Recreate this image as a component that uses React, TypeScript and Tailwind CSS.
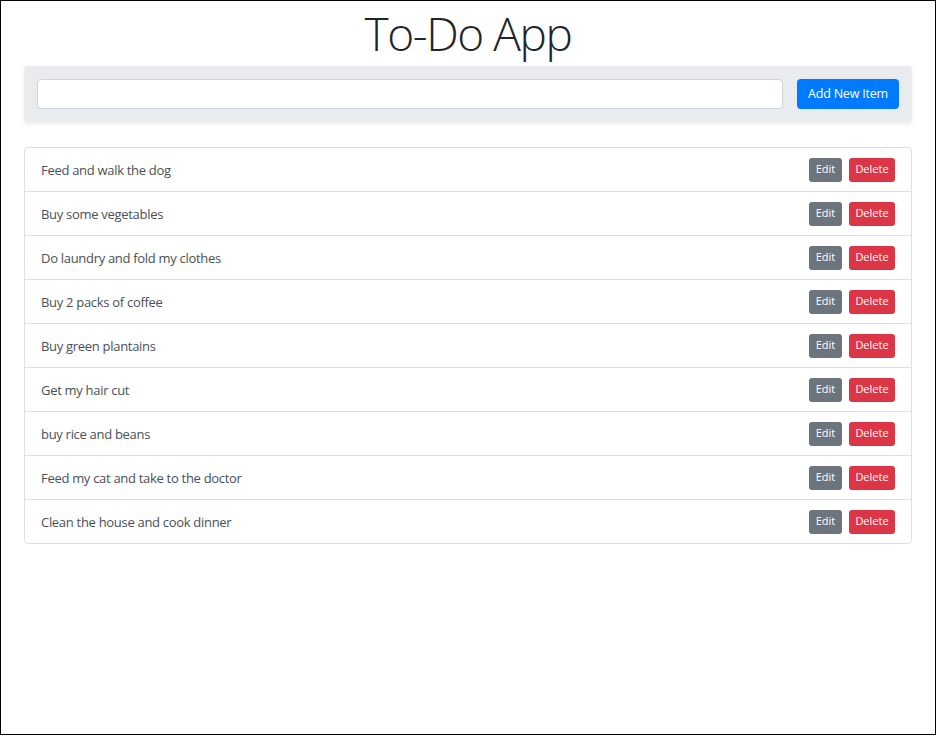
import { useState } from 'react';

const initialItems = [
  'Feed and walk the dog',
  'Buy some vegetables',
  'Do laundry and fold my clothes',
  'Buy 2 packs of coffee',
  'Buy green plantains',
  'Get my hair cut',
  'buy rice and beans',
  'Feed my cat and take to the doctor',
  'Clean the house and cook dinner',
];

export default function App() {
  const [items, setItems] = useState<string[]>(initialItems);
  const [text, setText] = useState('');

  const addItem = () => {
    if (!text.trim()) return;
    setItems([...items, text.trim()]);
    setText('');
  };

  const deleteItem = (index: number) => {
    setItems(items.filter((_, i) => i !== index));
  };

  return (
    <div className="w-[936px] h-[735px] border border-black bg-white font-['Open_Sans',sans-serif] text-[#212529]">
      <div className="px-[23px]">
        <h1 className="text-center text-[46px] leading-[64px] font-light text-[#212529] tracking-[-1.4px]">
          To-Do App
        </h1>
        <div className="mt-[1px] bg-[#e9ecef] rounded-[4px] shadow-[0_2px_4px_rgba(0,0,0,0.08)] px-[13px] py-[13px] flex gap-[14px]">
          <input
            value={text}
            onChange={(e) => setText(e.target.value)}
            className="flex-1 h-[30px] bg-white border border-[#ced4da] rounded-[4px] px-3 text-[14px] outline-none"
          />
          <button
            onClick={addItem}
            className="h-[30px] w-[102px] bg-[#007bff] text-white text-[12.5px] tracking-[-0.2px] rounded-[4px]"
          >
            Add New Item
          </button>
        </div>

        <ul className="mt-[25px] border border-[#dfdfdf] rounded-[4px]">
          {items.map((item, i) => (
            <li
              key={i}
              className="h-[44px] flex items-center justify-between pl-[16px] pr-[16px] border-b border-[#dfdfdf] last:border-b-0 last:h-[43px]"
            >
              <span className="text-[13px] tracking-[-0.3px] text-[#495057] pt-[2px]">{item}</span>
              <div className="flex gap-[7px]">
                <button className="h-[24px] w-[33px] bg-[#6c757d] text-white text-[11px] rounded-[3px]">
                  Edit
                </button>
                <button
                  onClick={() => deleteItem(i)}
                  className="h-[24px] w-[46px] bg-[#dc3545] text-white text-[11px] rounded-[3px]"
                >
                  Delete
                </button>
              </div>
            </li>
          ))}
        </ul>
      </div>
    </div>
  );
}
